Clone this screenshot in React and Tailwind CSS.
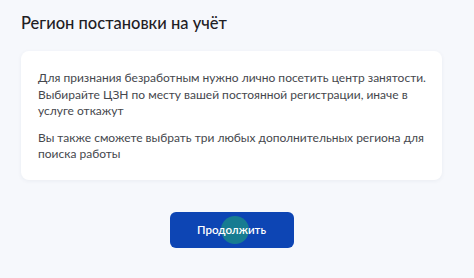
export default function App() {
  return (
    <div className="w-[474px] h-[278px] bg-[#f6f8fc] overflow-hidden" style={{ fontFamily: "Lato, 'Noto Sans', sans-serif" }}>
      <div className="pl-[21px] pr-[32px] pt-[11px]">
        <h1 className="text-[16.5px] leading-[24px] font-medium text-[#1f2024]">Регион постановки на учёт</h1>
        <div className="mt-[16px] h-[129px] bg-white rounded-[8px] shadow-[0_1px_4px_rgba(30,50,90,0.06)] pl-[17px] pr-[12px] pt-[19px] text-[12px] leading-[16.5px] text-[#45474d]">
          <p>Для признания безработным нужно лично посетить центр занятости. Выбирайте ЦЗН по месту вашей постоянной регистрации, иначе в услуге откажут</p>
          <p className="mt-[10px]">Вы также сможете выбрать три любых дополнительных региона для поиска работы</p>
        </div>
        <div className="flex justify-center mt-[32px]">
          <button className="relative w-[124px] h-[36px] rounded-[6px] bg-[#0d45b4] text-white text-[11.5px] font-semibold overflow-hidden">
            <span className="absolute left-[51px] top-[4px] w-[28px] h-[28px] rounded-full bg-[#1a8a88] opacity-80"></span>
            <span className="relative">Продолжить</span>
          </button>
        </div>
      </div>
    </div>
  );
}
